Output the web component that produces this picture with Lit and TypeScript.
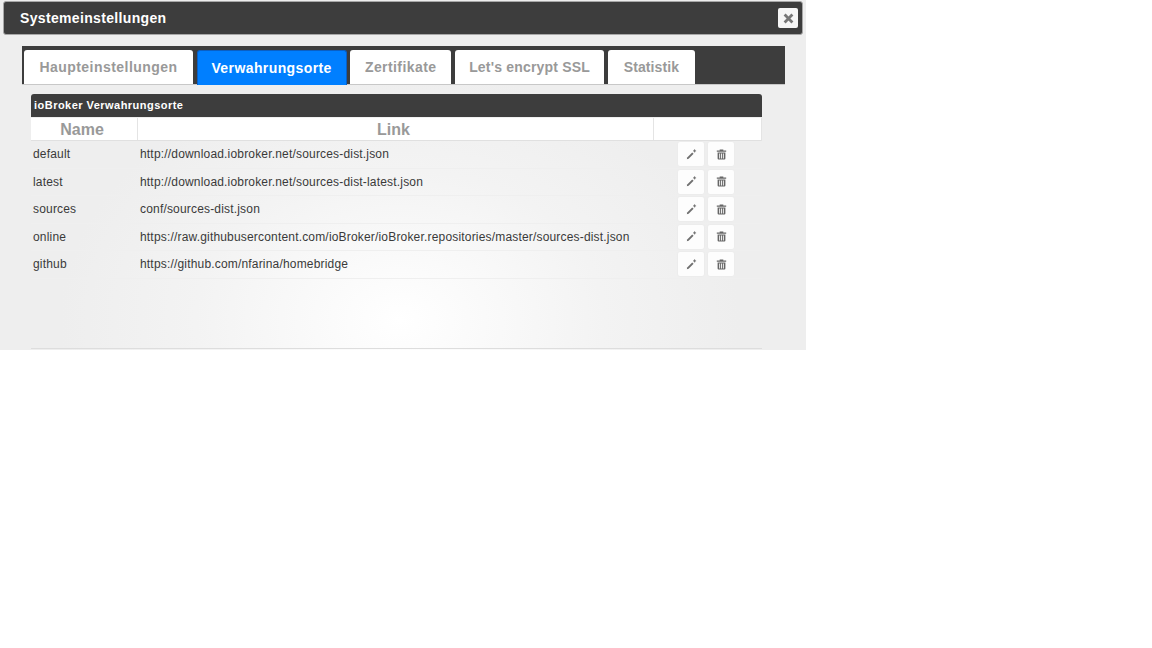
import { LitElement, html, css, svg } from "lit";
import { customElement } from "lit/decorators.js";

const rows = [
  ["default", "http://download.iobroker.net/sources-dist.json"],
  ["latest", "http://download.iobroker.net/sources-dist-latest.json"],
  ["sources", "conf/sources-dist.json"],
  ["online", "https://raw.githubusercontent.com/ioBroker/ioBroker.repositories/master/sources-dist.json"],
  ["github", "https://github.com/nfarina/homebridge"],
];
const tabs = [
  ["Haupteinstellungen", 169, 0.46],
  ["Verwahrungsorte", 150, 0.4],
  ["Zertifikate", 101, 0.42],
  ["Let's encrypt SSL", 149.5, 0.18],
  ["Statistik", 87, 0.1],
] as const;

const pencil = svg`<svg width="11" height="11" viewBox="0 0 11 11"><path d="M0.8 10.2 L1.2 8.4 L6.2 3.4 L7.6 4.8 L2.6 9.8 Z" fill="#707070"/><path d="M8.6 0.4 V3.4 M7.1 1.9 H10.1" stroke="#707070" stroke-width="1"/></svg>`;
const trash = svg`<svg width="11" height="11" viewBox="0 0 11 11"><path d="M0.8 1.6 H3.7 V0.5 H7.3 V1.6 H10.2 V2.7 H0.8 Z" fill="#666"/><path fill-rule="evenodd" d="M1.6 3.4 H9.4 V9.5 Q9.4 10.5 8.4 10.5 H2.6 Q1.6 10.5 1.6 9.5 Z M3.2 4.5 V9.4 H4.1 V4.5 Z M5.05 4.5 V9.4 H5.95 V4.5 Z M6.9 4.5 V9.4 H7.8 V4.5 Z" fill="#666"/></svg>`;

@customElement("app-root")
export class AppRoot extends LitElement {
  static styles = css`
    :host { display: block; width: 1152px; height: 648px; background: #fff; font-family: "Liberation Sans", Arial, sans-serif; overflow: hidden; }
    .dialog { width: 806px; height: 350px; box-sizing: border-box; padding: 1px 3px 0; background: radial-gradient(ellipse 340px 250px at 400px 320px, #fff 0%, #fafafa 25%, #f3f3f3 60%, #eee 100%), #eee; }
    .title { height: 34px; box-sizing: border-box; background: #3d3d3d; border: 1px solid #a8a8a8; border-radius: 3px; display: flex; align-items: center; justify-content: space-between; padding: 0 4px 0 16px; color: #fff; font-weight: bold; font-size: 14px; letter-spacing: 0.34px; }
    .close { width: 20px; height: 20px; background: #f6f6f6; border-radius: 2px; display: flex; align-items: center; justify-content: center; }
    .nav { margin: 11px 18px 0 19px; height: 39px; background: #3d3d3d; display: flex; gap: 3.6px; padding: 4px 0 0 2px; box-sizing: border-box; border-bottom: 1px solid #c8c8c8; }
    .tab { height: 34px; box-sizing: border-box; background: #fff; border-radius: 3px 3px 0 0; display: flex; align-items: center; justify-content: center; color: #999; font-weight: bold; font-size: 14px; }
    .tab.active { background: #007fff; color: #fff; border: 1px solid #0a5fc4; border-bottom: none; height: 35px; }
    .wrap { margin: 9px 41px 0 28px; }
    .cap { height: 23px; background: #3d3d3d; border-radius: 3px 3px 0 0; color: #fff; font-weight: bold; font-size: 11px; line-height: 23px; padding-left: 3px; letter-spacing: 0.47px; }
    .grid { display: grid; grid-template-columns: 107px 516px 1fr; }
    .head { margin-top: 1px; height: 23px; box-sizing: border-box; background: #fff; border-bottom: 1px solid #e0e0e0; border-right: 1px solid #e4e4e4; width: 731px; }
    .th { display: flex; align-items: center; justify-content: center; color: #999; font-weight: bold; font-size: 16px; height: 22px; box-sizing: border-box; padding: 2px 4px 0 0; border-right: 1px solid #e4e4e4; }
    .th:last-child { border-right: none; }
    .row { height: 27.5px; box-sizing: border-box; border-bottom: 1px solid #efefef; color: #3a3a3a; font-size: 12px; letter-spacing: 0.18px; align-items: center; width: 731px; }
    .row > div { padding-left: 2px; white-space: nowrap; }
    .actions { display: flex; gap: 2px; padding-left: 23px !important; }
    .btn { width: 28px; height: 26px; box-sizing: border-box; background: #fdfdfd; border: 1px solid #ececec; border-radius: 3px; display: flex; align-items: center; justify-content: center; }
    .spacer { height: 69px; border-bottom: 1px solid #ddd; width: 731px; }
  `;

  render() {
    return html`<div class="dialog">
      <div class="title">
        <span>Systemeinstellungen</span>
        <span class="close"><svg width="11" height="11" viewBox="0 0 11 11"><path d="M1.6 1.6 L9.4 9.4 M9.4 1.6 L1.6 9.4" stroke="#777" stroke-width="2.8"/></svg></span>
      </div>
      <div class="nav">
        ${tabs.map(([t, w, ls], i) => html`<div class="tab ${i === 1 ? "active" : ""}" style="width:${w}px;letter-spacing:${ls}px">${t}</div>`)}
      </div>
      <div class="wrap">
        <div class="cap">ioBroker Verwahrungsorte</div>
        <div class="head grid">
          <div class="th">Name</div><div class="th">Link</div><div class="th"></div>
        </div>
        ${rows.map(([n, l]) => html`<div class="row grid">
          <div>${n}</div><div>${l}</div>
          <div class="actions"><span class="btn">${pencil}</span><span class="btn">${trash}</span></div>
        </div>`)}
        <div class="spacer"></div>
      </div>
    </div>`;
  }
}
